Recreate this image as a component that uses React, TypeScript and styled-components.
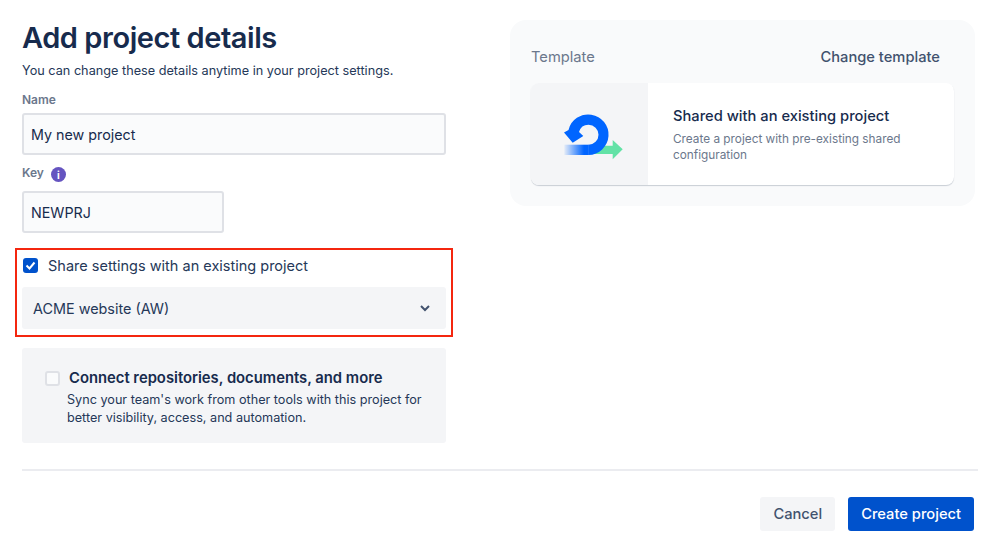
import { createGlobalStyle, styled } from 'styled-components'

const GlobalStyle = createGlobalStyle`
  html, body {
    margin: 0;
    padding: 0;
    background: #fff;
    color: #172b4d;
    font-family: Inter, "Noto Sans", sans-serif;
  }
`

const Page = styled.div`
  width: 999px;
  height: 539px;
  box-sizing: border-box;
  padding: 20px 21px 0 22px;
  overflow: hidden;
  display: flex;
  flex-direction: column;
`

const Columns = styled.div`
  display: flex;
  justify-content: space-between;
  height: 449px;
  padding-right: 3px;
`

const FormColumn = styled.div`
  width: 424px;
  display: flex;
  flex-direction: column;
`

const Title = styled.h1`
  margin: 0;
  font-size: 29px;
  line-height: 35px;
  font-weight: 600;
  letter-spacing: -0.45px;
  color: #172b4d;
`

const Hint = styled.p`
  margin: 8px 0 0;
  font-size: 12.7px;
  line-height: 16px;
  color: #253858;
`

const Label = styled.div<{ $top: number }>`
  display: flex;
  align-items: center;
  gap: 7px;
  margin-top: ${(p) => p.$top}px;
  font-size: 12px;
  line-height: 16px;
  font-weight: 600;
  color: #6b778c;
`

const InfoDot = styled.span`
  width: 15px;
  height: 15px;
  margin-top: 4px;
  border-radius: 50%;
  background: #6554c0;
  color: #fff;
  display: flex;
  align-items: center;
  justify-content: center;
  font-size: 10px;
  font-weight: 700;
`

const Field = styled.div<{ $width: number; $top: number }>`
  box-sizing: border-box;
  width: ${(p) => p.$width}px;
  height: 42px;
  margin-top: ${(p) => p.$top}px;
  padding: 0 7px;
  display: flex;
  align-items: center;
  background: #fafbfc;
  border: 2px solid #dfe1e6;
  border-radius: 3px;
  font-size: 14.3px;
  color: #172b4d;
`

const Highlight = styled.div`
  box-sizing: border-box;
  width: 438px;
  height: 89px;
  margin: 15px 0 0 -7px;
  padding: 4px 5px 0 5px;
  border: 2px solid #f4260f;
`

const CheckRow = styled.label`
  display: flex;
  align-items: center;
  gap: 10px;
  height: 22px;
  padding-left: 1px;
  font-size: 14.5px;
  color: #253858;
`

const Check = styled.span<{ $on?: boolean }>`
  box-sizing: border-box;
  flex: none;
  width: 15px;
  height: 15px;
  border-radius: 3px;
  display: flex;
  align-items: center;
  justify-content: center;
  background: ${(p) => (p.$on ? '#0052cc' : '#fafbfc')};
  border: ${(p) => (p.$on ? 'none' : '2px solid #dfe1e6')};
`

const Select = styled.div`
  height: 42px;
  margin-top: 11px;
  padding: 0 16px 0 11px;
  display: flex;
  align-items: center;
  justify-content: space-between;
  background: #f4f5f7;
  border-radius: 3px;
  font-size: 14.4px;
  color: #253858;
`

const ConnectCard = styled.div`
  box-sizing: border-box;
  height: 95px;
  margin-top: 11px;
  padding: 21px 16px 0 23px;
  background: #f4f5f7;
  border-radius: 3px;
`

const ConnectTitle = styled.div`
  display: flex;
  align-items: center;
  gap: 9px;
  font-size: 14.8px;
  line-height: 18px;
  font-weight: 600;
  color: #172b4d;
`

const ConnectText = styled.p`
  margin: 4px 0 0 22px;
  font-size: 12.65px;
  line-height: 18px;
  color: #253858;
`

const TemplatePanel = styled.aside`
  box-sizing: border-box;
  width: 465px;
  height: 186px;
  padding: 27px 21px 0 21px;
  background: #f9fafb;
  border-radius: 16px;
`

const TemplateHead = styled.div`
  display: flex;
  justify-content: space-between;
  align-items: center;
  height: 19px;
  font-size: 14.7px;
  color: #6b778c;
`

const ChangeLink = styled.span`
  font-weight: 500;
  color: #42526e;
  padding-right: 14px;
`

const TemplateCard = styled.div`
  display: flex;
  height: 102px;
  margin-top: 17px;
  background: #fff;
  border-radius: 8px;
  box-shadow: 0 1px 1px rgba(9, 30, 66, 0.2);
  overflow: hidden;
`

const TemplateArt = styled.div`
  width: 117px;
  flex: none;
  background: #f4f5f7;
`

const TemplateBody = styled.div`
  padding: 24px 30px 0 25px;
`

const TemplateName = styled.div`
  font-size: 14.7px;
  line-height: 18px;
  font-weight: 500;
  color: #172b4d;
`

const TemplateText = styled.p`
  margin: 6px 0 0;
  font-size: 11.8px;
  line-height: 16px;
  color: #6b778c;
`

const Footer = styled.div`
  border-top: 2px solid #ebecf0;
  padding: 26px 4px 0 0;
  display: flex;
  justify-content: flex-end;
  gap: 13px;
`

const Button = styled.button<{ $primary?: boolean }>`
  height: 34px;
  padding: 0 13px;
  border: none;
  border-radius: 3px;
  font-family: inherit;
  font-size: 14.7px;
  font-weight: 500;
  color: ${(p) => (p.$primary ? '#fff' : '#42526e')};
  background: ${(p) => (p.$primary ? '#0052cc' : '#f4f5f7')};
`

const TemplateIcon = () => (
  <svg width="117" height="102" viewBox="0 0 117 102">
    <defs>
      <linearGradient id="tail" gradientUnits="userSpaceOnUse" x1="33" x2="53" y1="0" y2="0">
        <stop offset="0" stopColor="#0065ff" stopOpacity="0.05" />
        <stop offset="1" stopColor="#0065ff" />
      </linearGradient>
    </defs>
    <path d="M62 62.700h19.700V57l10 9.300-10 10V71H62z" fill="#62e2a6" />
    <rect x="33.300" y="61.700" width="24.500" height="10.300" fill="url(#tail)" />
    <path
      d="M57.500 72A20.300 20.300 0 1 0 37.500 47L33 49.500 41.700 59.700 52.300 53 48 49A10 10 0 0 1 57.500 41.700A10 10 0 0 1 57.500 61.700Z"
      fill="#0065ff"
    />
  </svg>
)

export default function App() {
  return (
    <>
      <GlobalStyle />
      <Page>
        <Columns>
          <FormColumn>
            <Title>Add project details</Title>
            <Hint>You can change these details anytime in your project settings.</Hint>
            <Label $top={13}>Name</Label>
            <Field $width={424} $top={5}>
              My new project
            </Field>
            <Label $top={8}>
              Key <InfoDot>i</InfoDot>
            </Label>
            <Field $width={202} $top={9}>
              NEWPRJ
            </Field>
            <Highlight>
              <CheckRow>
                <Check $on>
                  <svg width="11" height="9" viewBox="0 0 11 9">
                    <path d="M1.500 4.500l3 3 5-6" fill="none" stroke="#fff" strokeWidth="2" />
                  </svg>
                </Check>
                Share settings with an existing project
              </CheckRow>
              <Select>
                ACME website (AW)
                <svg width="10" height="7" viewBox="0 0 10 7">
                  <path d="M1 1l4 4 4-4" fill="none" stroke="#42526e" strokeWidth="2" />
                </svg>
              </Select>
            </Highlight>
            <ConnectCard>
              <ConnectTitle>
                <Check />
                Connect repositories, documents, and more
              </ConnectTitle>
              <ConnectText>
                Sync your team's work from other tools with this project for better visibility,
                access, and automation.
              </ConnectText>
            </ConnectCard>
          </FormColumn>
          <TemplatePanel>
            <TemplateHead>
              Template
              <ChangeLink>Change template</ChangeLink>
            </TemplateHead>
            <TemplateCard>
              <TemplateArt>
                <TemplateIcon />
              </TemplateArt>
              <TemplateBody>
                <TemplateName>Shared with an existing project</TemplateName>
                <TemplateText>Create a project with pre-existing shared configuration</TemplateText>
              </TemplateBody>
            </TemplateCard>
          </TemplatePanel>
        </Columns>
        <Footer>
          <Button>Cancel</Button>
          <Button $primary>Create project</Button>
        </Footer>
      </Page>
    </>
  )
}
